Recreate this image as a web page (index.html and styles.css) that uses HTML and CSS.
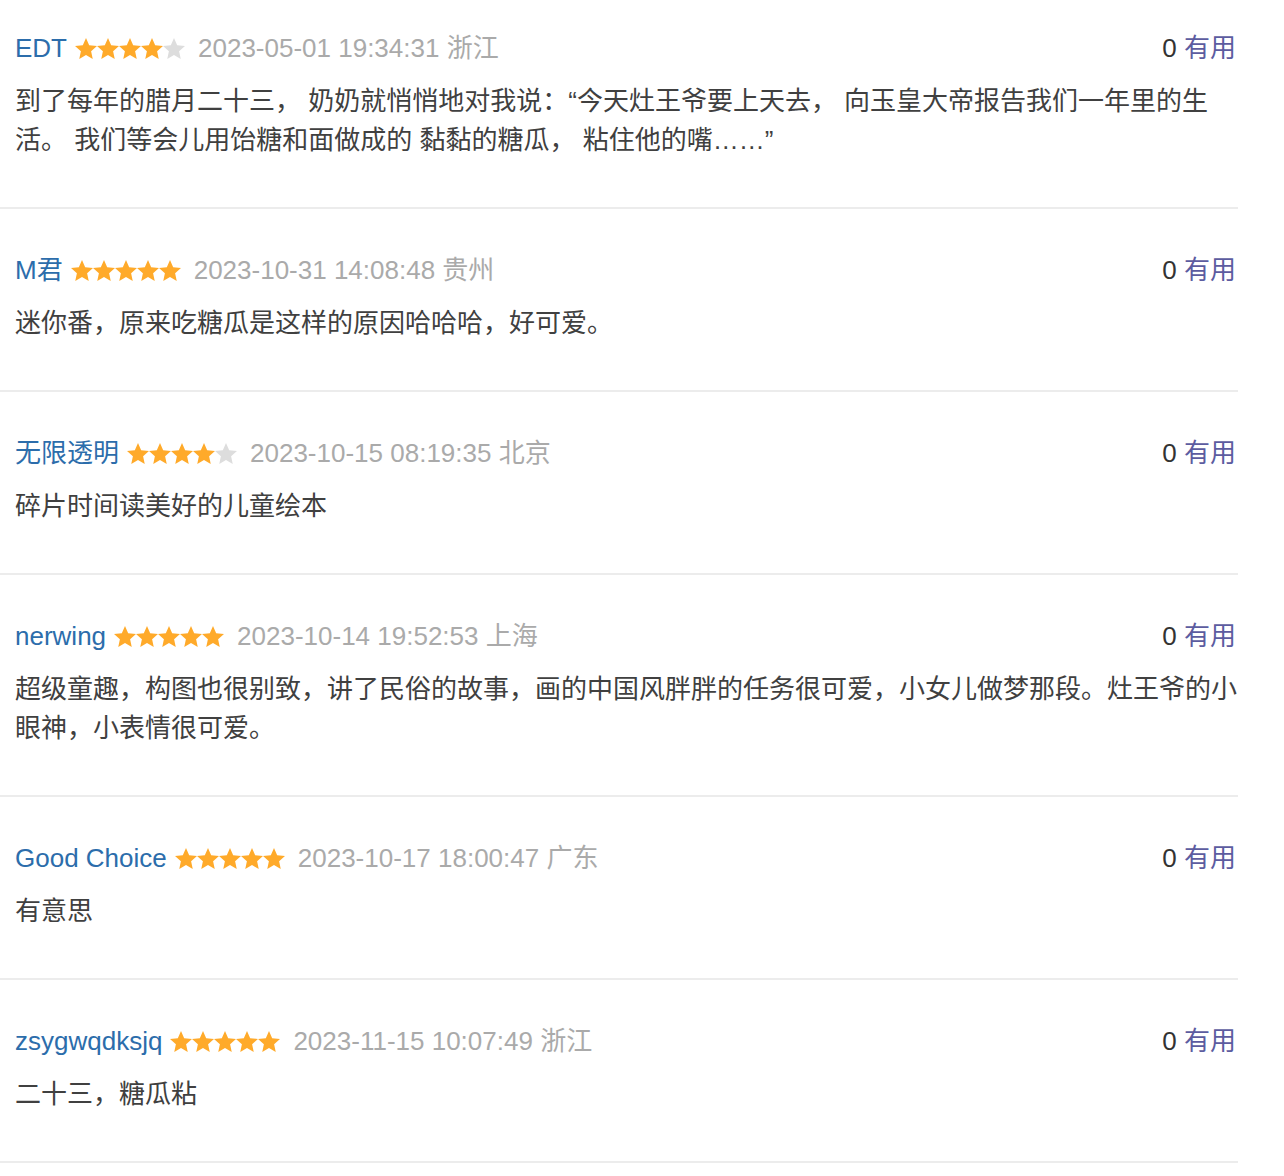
FILE: index.html
```html
<!DOCTYPE html>
<html lang="zh-CN">
<head>
<meta charset="utf-8">
<title>评论</title>
<link rel="stylesheet" href="styles.css">
</head>
<body>
<svg class="defs" width="0" height="0" aria-hidden="true">
  <symbol id="star" viewBox="0.6 0.6 22.8 21.8">
    <polygon points="12,0.6 15.3,8 23.4,8.8 17.3,14.3 19,22.4 12,18.3 5,22.4 6.7,14.3 0.6,8.8 8.7,8"/>
  </symbol>
</svg>
<div class="list">
  <div class="review">
    <div class="head">
      <div class="meta">
        <span class="name">EDT</span>
        <span class="stars"><svg class="on"><use href="#star"/></svg><svg class="on"><use href="#star"/></svg><svg class="on"><use href="#star"/></svg><svg class="on"><use href="#star"/></svg><svg class="off"><use href="#star"/></svg></span>
        <span class="date">2023-05-01 19:34:31 浙江</span>
      </div>
      <div class="useful"><span class="count">0</span> <span class="label">有用</span></div>
    </div>
    <p class="body">到了每年的腊月二十三， 奶奶就悄悄地对我说：“今天灶王爷要上天去， 向玉皇大帝报告我们一年里的生活。 我们等会儿用饴糖和面做成的 黏黏的糖瓜， 粘住他的嘴……”</p>
  </div>
  <div class="review">
    <div class="head">
      <div class="meta">
        <span class="name">M君</span>
        <span class="stars"><svg class="on"><use href="#star"/></svg><svg class="on"><use href="#star"/></svg><svg class="on"><use href="#star"/></svg><svg class="on"><use href="#star"/></svg><svg class="on"><use href="#star"/></svg></span>
        <span class="date">2023-10-31 14:08:48 贵州</span>
      </div>
      <div class="useful"><span class="count">0</span> <span class="label">有用</span></div>
    </div>
    <p class="body">迷你番，原来吃糖瓜是这样的原因哈哈哈，好可爱。</p>
  </div>
  <div class="review">
    <div class="head">
      <div class="meta">
        <span class="name">无限透明</span>
        <span class="stars"><svg class="on"><use href="#star"/></svg><svg class="on"><use href="#star"/></svg><svg class="on"><use href="#star"/></svg><svg class="on"><use href="#star"/></svg><svg class="off"><use href="#star"/></svg></span>
        <span class="date">2023-10-15 08:19:35 北京</span>
      </div>
      <div class="useful"><span class="count">0</span> <span class="label">有用</span></div>
    </div>
    <p class="body">碎片时间读美好的儿童绘本</p>
  </div>
  <div class="review">
    <div class="head">
      <div class="meta">
        <span class="name">nerwing</span>
        <span class="stars"><svg class="on"><use href="#star"/></svg><svg class="on"><use href="#star"/></svg><svg class="on"><use href="#star"/></svg><svg class="on"><use href="#star"/></svg><svg class="on"><use href="#star"/></svg></span>
        <span class="date">2023-10-14 19:52:53 上海</span>
      </div>
      <div class="useful"><span class="count">0</span> <span class="label">有用</span></div>
    </div>
    <p class="body">超级童趣，构图也很别致，讲了民俗的故事，画的中国风胖胖的任务很可爱，小女儿做梦那段。灶王爷的小眼神，小表情很可爱。</p>
  </div>
  <div class="review">
    <div class="head">
      <div class="meta">
        <span class="name">Good Choice</span>
        <span class="stars"><svg class="on"><use href="#star"/></svg><svg class="on"><use href="#star"/></svg><svg class="on"><use href="#star"/></svg><svg class="on"><use href="#star"/></svg><svg class="on"><use href="#star"/></svg></span>
        <span class="date">2023-10-17 18:00:47 广东</span>
      </div>
      <div class="useful"><span class="count">0</span> <span class="label">有用</span></div>
    </div>
    <p class="body">有意思</p>
  </div>
  <div class="review">
    <div class="head">
      <div class="meta">
        <span class="name">zsygwqdksjq</span>
        <span class="stars"><svg class="on"><use href="#star"/></svg><svg class="on"><use href="#star"/></svg><svg class="on"><use href="#star"/></svg><svg class="on"><use href="#star"/></svg><svg class="on"><use href="#star"/></svg></span>
        <span class="date">2023-11-15 10:07:49 浙江</span>
      </div>
      <div class="useful"><span class="count">0</span> <span class="label">有用</span></div>
    </div>
    <p class="body">二十三，糖瓜粘</p>
  </div>
</div>
</body>
</html>
```

FILE: styles.css
```css
html, body {
  margin: 0;
  padding: 0;
  background: #ffffff;
}

body {
  font-family: "Liberation Sans", Arial, "Noto Sans CJK SC", sans-serif;
  color: #404040;
}

.defs {
  position: absolute;
  width: 0;
  height: 0;
  overflow: hidden;
}

.list {
  width: 1238px;
}

.review {
  padding: 43px 0 47px 15px;
  border-bottom: 2px solid #ececec;
}

.review:first-child {
  padding-top: 30px;
}

.head {
  display: flex;
  align-items: center;
  justify-content: space-between;
  height: 36px;
  padding-right: 2px;
  font-size: 26px;
  line-height: 36px;
}

.meta {
  display: flex;
  align-items: center;
}

.name {
  color: #2c6dab;
}

.stars {
  display: flex;
  margin-left: 8px;
  margin-right: 13px;
}

.stars svg {
  width: 22px;
  height: 21px;
  display: block;
}

.stars .on {
  fill: #ffaa2a;
}

.stars .off {
  fill: #dddddd;
}

.date {
  color: #aaaaaa;
}

.useful {
  white-space: pre;
}

.count {
  color: #333333;
}

.label {
  color: #5c5ca0;
}

.body {
  margin: 16px 0 0 0;
  font-size: 26px;
  line-height: 39px;
  color: #404040;
}
```
